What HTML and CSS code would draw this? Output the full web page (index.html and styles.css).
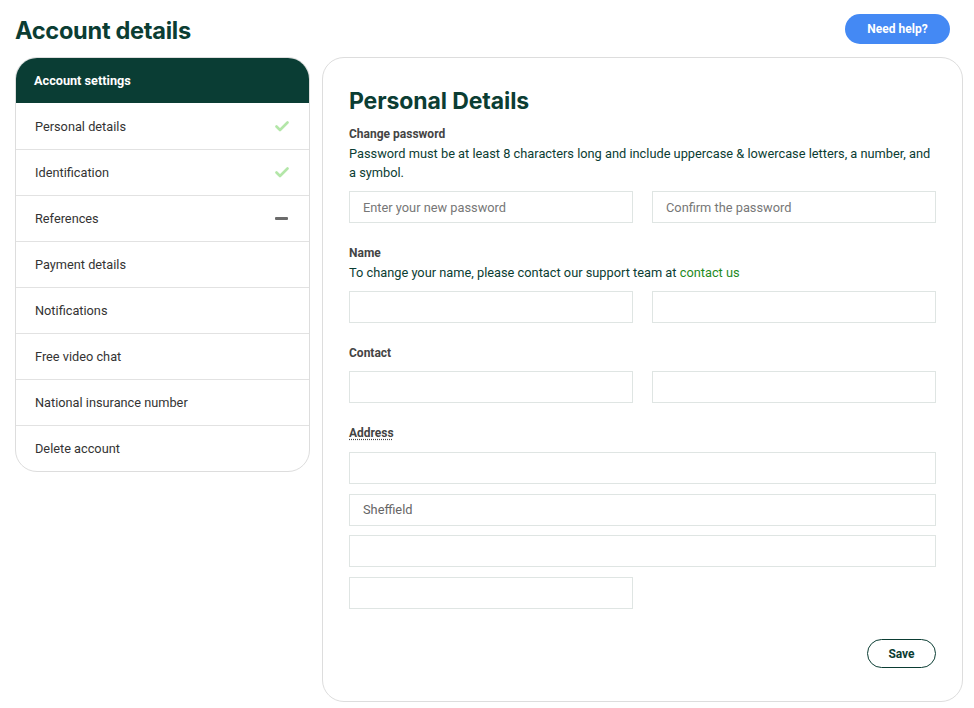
FILE: index.html
```html
<!DOCTYPE html>
<html>
<head>
<meta charset="utf-8">
<link rel="stylesheet" href="styles.css">
</head>
<body>
<div class="page">
  <header class="top">
    <h1 class="title">Account details</h1>
    <button class="help">Need help?</button>
  </header>
  <div class="cols">
    <nav class="side">
      <div class="side-head">Account settings</div>
      <div class="side-item"><span>Personal details</span><svg class="check" viewBox="0 0 14 11" width="14" height="11"><path d="M1.5 5.5 L5 9 L12.5 1.5" fill="none" stroke="#b3e6a8" stroke-width="2.6" stroke-linecap="round" stroke-linejoin="round"/></svg></div>
      <div class="side-item"><span>Identification</span><svg class="check" viewBox="0 0 14 11" width="14" height="11"><path d="M1.5 5.5 L5 9 L12.5 1.5" fill="none" stroke="#b3e6a8" stroke-width="2.6" stroke-linecap="round" stroke-linejoin="round"/></svg></div>
      <div class="side-item"><span>References</span><span class="dash"></span></div>
      <div class="side-item"><span>Payment details</span></div>
      <div class="side-item"><span>Notifications</span></div>
      <div class="side-item"><span>Free video chat</span></div>
      <div class="side-item"><span>National insurance number</span></div>
      <div class="side-item last"><span>Delete account</span></div>
    </nav>
    <main class="card">
      <h2 class="card-title">Personal Details</h2>
      <section class="sec first">
        <div class="label">Change password</div>
        <p class="hint">Password must be at least 8 characters long and include uppercase &amp; lowercase letters, a number, and a symbol.</p>
        <div class="row">
          <input class="field" type="password" placeholder="Enter your new password">
          <input class="field" type="password" placeholder="Confirm the password">
        </div>
      </section>
      <section class="sec">
        <div class="label">Name</div>
        <p class="hint">To change your name, please contact our support team at <a class="link" href="#">contact us</a></p>
        <div class="row">
          <input class="field" type="text">
          <input class="field" type="text">
        </div>
      </section>
      <section class="sec">
        <div class="label lab-gap">Contact</div>
        <div class="row">
          <input class="field" type="text">
          <input class="field" type="text">
        </div>
      </section>
      <section class="sec">
        <div class="label lab-gap addr"><abbr class="abbr">Address</abbr></div>
        <div class="stack">
          <input class="field" type="text">
          <input class="field" type="text" value="Sheffield">
          <input class="field" type="text">
          <div class="row"><input class="field" type="text"><span></span></div>
        </div>
      </section>
      <div class="actions"><button class="save">Save</button></div>
    </main>
  </div>
</div>
</body>
</html>
```
FILE: styles.css
```css
* { box-sizing: border-box; }
html, body { margin: 0; padding: 0; background: #fff; }
body { font-family: Roboto, "Liberation Sans", sans-serif; color: #333; }
.page { padding: 14px 11px 0 15px; width: 974px; }
.top { display: flex; justify-content: space-between; align-items: flex-start; height: 43px; }
.title { margin: 2px 0 0; font-family: Inter, "Open Sans", sans-serif; font-weight: 700; font-size: 23.6px; letter-spacing: -0.3px; color: #0b3d33; line-height: 30px; }
.help { margin-right: 13px; width: 105px; height: 30px; border: none; border-radius: 15px; background: #4489f4; color: #fff; font-family: Roboto, sans-serif; font-weight: 700; font-size: 12px; padding: 0; }
.cols { display: flex; gap: 12px; align-items: flex-start; }
.side { width: 295px; border: 1px solid #ddd; border-radius: 22px; overflow: hidden; }
.side-head { height: 46px; background: #0a3d34; color: #fff; font-weight: 700; font-size: 12.7px; display: flex; align-items: center; padding-left: 19px; margin: -1px -1px 0; }
.side-item { height: 46px; border-top: 1px solid #e2e2e2; display: flex; align-items: center; justify-content: space-between; padding: 0 20px 0 19px; font-size: 12.75px; color: #333; }
.side-head + .side-item { border-top: none; }
.dash { width: 13px; height: 3px; background: #6b6b6b; border-radius: 1px; margin-right: 1px; }
.card { width: 641px; height: 645px; border: 1px solid #ddd; border-radius: 22px; padding: 29px 26px 0 26px; }
.card-title { margin: 0; font-family: Inter, "Open Sans", sans-serif; font-weight: 700; font-size: 23px; color: #0b3d33; line-height: 28px; letter-spacing: -0.1px; }
.sec { margin-top: 22px; }
.sec.first { margin-top: 11px; }
.label { font-size: 12px; font-weight: 700; color: #444; line-height: 16px; }
.lab-gap { margin-bottom: 10px; }
.lab-gap.addr { margin-bottom: 11px; }
.abbr { text-decoration: underline dotted; text-underline-offset: 2px; }
.hint { margin: 2px 0 9px; font-size: 12.8px; color: #0b3d33; line-height: 19px; }
.link { color: #1f8a1f; text-decoration: none; }
.row { display: grid; grid-template-columns: 1fr 1fr; column-gap: 19px; }
.stack { display: flex; flex-direction: column; gap: 9.7px; }
.field { width: 100%; height: 32px; border: 1px solid #dfe5e3; border-radius: 0; padding: 0 13px; font-family: Roboto, sans-serif; font-size: 12.8px; color: #666; background: #fff; outline: none; }
.field::placeholder { color: #777; }
.actions { display: flex; justify-content: flex-end; margin-top: 30px; }
.save { width: 69px; height: 29px; border: 1.5px solid #0b3d33; border-radius: 15px; background: #fff; color: #0b3d33; font-family: Roboto, sans-serif; font-weight: 700; font-size: 12px; padding: 0; }
```
